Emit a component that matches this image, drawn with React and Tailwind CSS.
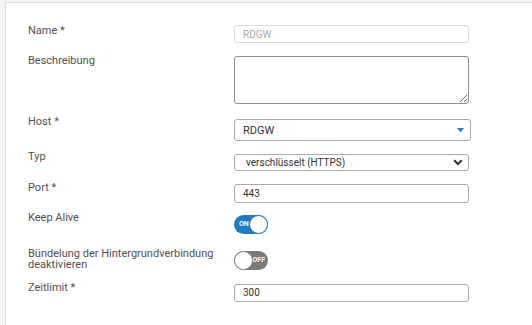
import { useState } from "react";

function Toggle({ on }) {
  return (
    <div
      className={
        "relative w-[34px] h-[19px] rounded-full " +
        (on ? "bg-[#1e7bc4]" : "bg-[#7a7a7a]")
      }
    >
      <span
        className={
          "absolute top-[5px] text-[7px] leading-[9px] font-bold text-white " +
          (on ? "left-[5px]" : "right-[3px]")
        }
      >
        {on ? "ON" : "OFF"}
      </span>
      <span
        className={
          "absolute top-0 w-[19px] h-[19px] rounded-full bg-white border " +
          (on ? "right-0 border-[#1e7bc4]" : "left-0 border-[#8a8a8a]")
        }
      />
    </div>
  );
}

function Row({ label, top, children, labelClass = "", lead = "leading-[14px]" }) {
  return (
    <div className="flex items-start" style={{ marginTop: top }}>
      <div className={"w-[206px] shrink-0 text-[11px] text-[#505050] " + lead + " " + labelClass}>
        {label}
      </div>
      <div className="w-[238px] text-[0px] leading-none">{children}</div>
    </div>
  );
}

export default function App() {
  const [desc, setDesc] = useState("");

  return (
    <div className="w-[532px] h-[325px] bg-[#f4f4f4] pl-[5px] pt-[2px] overflow-hidden font-['Roboto',_sans-serif]">
      <div className="h-[340px] bg-white border-l border-t border-[#dcdcdc] pl-[22px] pt-[22px]">
        <Row label="Name *" top={0} labelClass="mt-[-1px]">
          <input
            disabled
            value="RDGW"
            readOnly
            className="block w-[235px] h-[18px] border border-[#dcdcdc] rounded-[3px] px-[8px] text-[10px] text-[#a8a8a8] bg-white"
          />
        </Row>
        <Row label="Beschreibung" top={13} labelClass="mt-[-2px]">
          <textarea
            value={desc}
            onChange={(e) => setDesc(e.target.value)}
            className="block w-[235px] h-[48px] border border-[#8f8f8f] rounded-[3px] bg-white"
          />
        </Row>
        <Row label="Host *" top={15} labelClass="mt-[-4px]">
          <div className="w-[237px] h-[22px] border border-[#a9a9a9] rounded-[3px] flex items-center justify-between pl-[8px] pr-[6px] text-[11px] text-[#333]">
            <span>RDGW</span>
            <svg width="7" height="5" viewBox="0 0 7 5">
              <path d="M0 0h7L3.5 4.5z" fill="#2b7fd0" />
            </svg>
          </div>
        </Row>
        <Row label="Typ" top={13} labelClass="mt-[-4px]">
          <div className="w-[235px] h-[17px] border border-[#a9a9a9] rounded-[3px] flex items-center justify-between pl-[11px] pr-[5px] text-[10px] text-[#333]">
            <span>verschlüsselt (HTTPS)</span>
            <svg width="10" height="7" viewBox="0 0 10 7">
              <path d="M1.2 1.2L5 5l3.8-3.8" fill="none" stroke="#333" strokeWidth="2" />
            </svg>
          </div>
        </Row>
        <Row label="Port *" top={13} labelClass="mt-[-3px]">
          <div className="w-[235px] h-[19px] border border-[#a9a9a9] rounded-[3px] flex items-center pl-[8px] text-[10px] text-[#333]">
            443
          </div>
        </Row>
        <Row label="Keep Alive" top={12} labelClass="mt-[-4px]">
          <Toggle on />
        </Row>
        <Row
          label="Bündelung der Hintergrundverbindung deaktivieren"
          top={17}
          lead="leading-[11px]"
          labelClass="mt-[-3px] pr-[16px]"
        >
          <Toggle on={false} />
        </Row>
        <Row label="Zeitlimit *" top={14} labelClass="mt-[-3px]">
          <div className="w-[235px] h-[18px] border border-[#a9a9a9] rounded-[3px] flex items-center pl-[8px] text-[10px] text-[#333]">
            300
          </div>
        </Row>
      </div>
    </div>
  );
}
